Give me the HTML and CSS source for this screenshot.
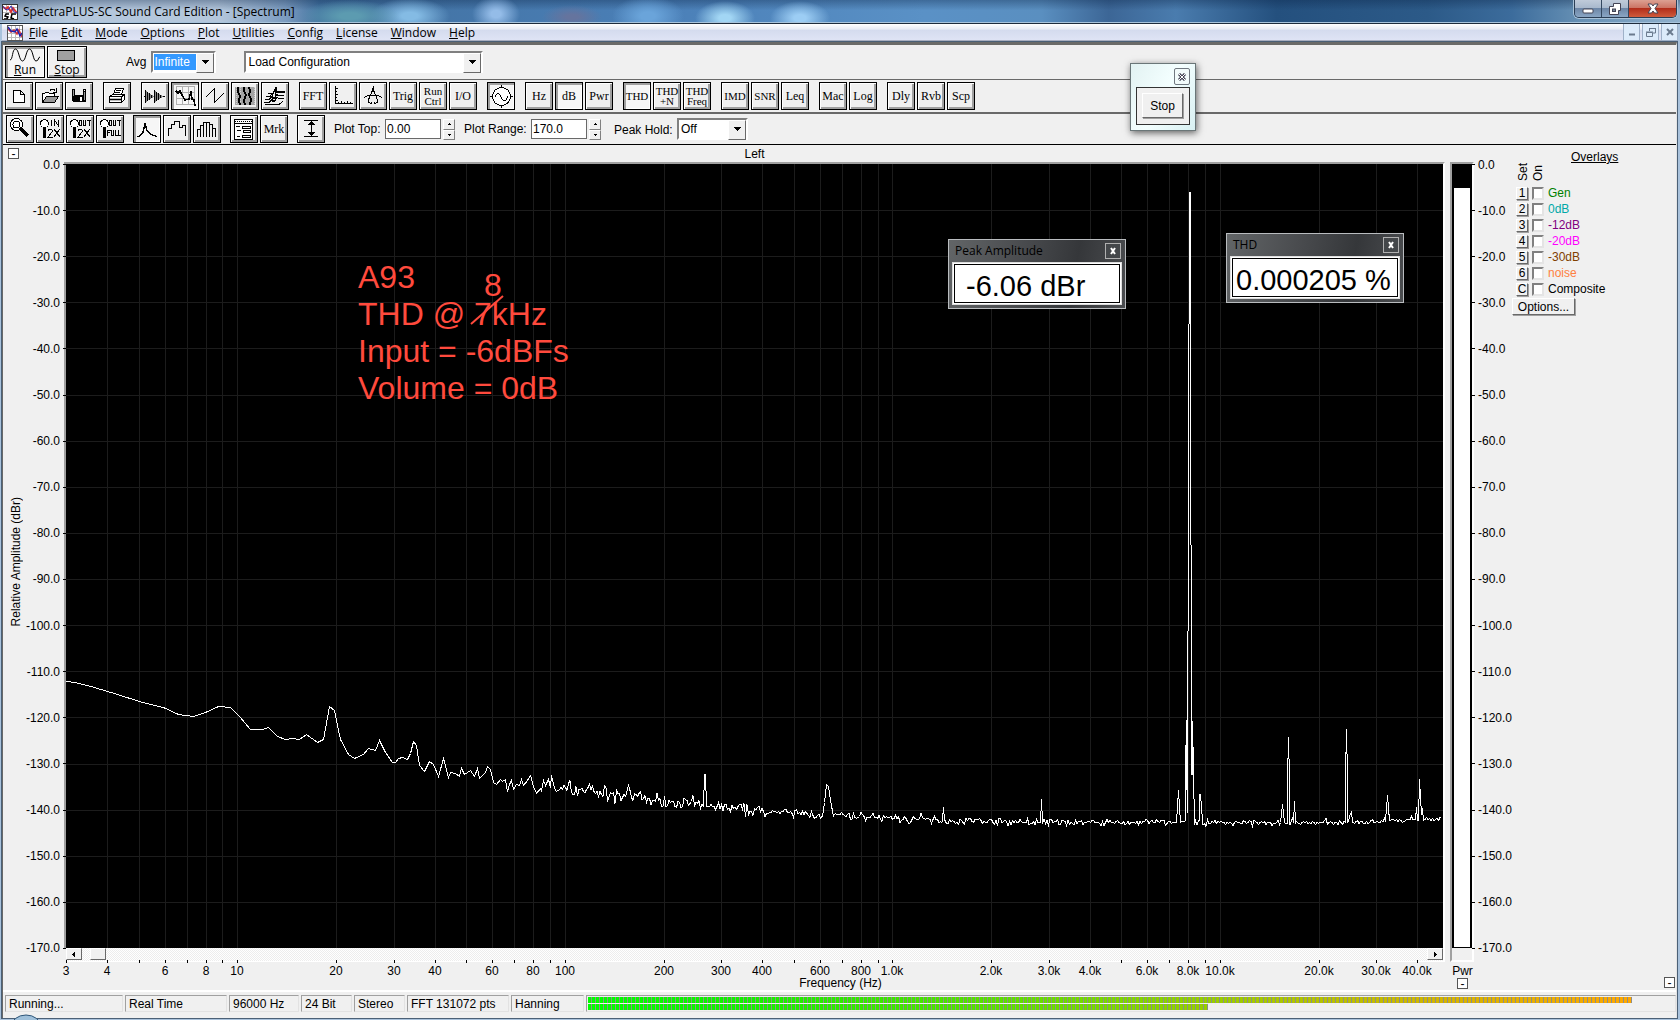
FILE: index.html
```html
<!DOCTYPE html>
<html lang="en">
<head>
<meta charset="utf-8">
<title>SpectraPLUS-SC Sound Card Edition - [Spectrum]</title>
<link rel="stylesheet" href="styles.css">
</head>
<body>
<header class="titlebar">
  <svg class="appicon" viewBox="0 0 16 16"><rect width="16" height="16" fill="#fff"/><path d="M0 3.500h16M0 8.500h16M4.500 0v16M9.500 0v16" stroke="#bbb"/><path d="M1 3l3 2 2-2 3 5 2-4 4 5" fill="none" stroke="#d33" stroke-width="2"/><path d="M1 2l2 3 3 1 3-4 3 6 3 1" fill="none" stroke="#33b" stroke-width="1"/><path d="M7 10l-3 0-1 2 3 1-1 2H2M14 10l-4 0-1 4 3 1" fill="none" stroke="#000" stroke-width="1.500"/><rect x=".5" y=".5" width="15" height="15" fill="none" stroke="#333"/></svg>
  <h1>SpectraPLUS-SC Sound Card Edition - [Spectrum]</h1>
  <div class="caption">
    <button aria-label="Minimize"><svg width="12" height="12"><rect x="1" y="6" width="10" height="4" rx="1" fill="#fff" stroke="#445"/></svg></button>
    <button aria-label="Restore"><svg width="12" height="12"><path d="M4.500.5h7v7h-2v4h-9v-8h4z" fill="#fff" stroke="#445"/><rect x="3.500" y="6" width="3" height="2.500" fill="#789" stroke="#445"/></svg></button>
    <button class="close" aria-label="Close"><svg width="12" height="11"><path d="M1 1h3.500L6 3l1.500-2H11L8 5.500l3 4.500H7.500L6 8l-1.500 2H1l3-4.500z" fill="#fff" stroke="#445"/></svg></button>
  </div>
</header>
<nav class="menubar">
  <svg class="docicon" viewBox="0 0 16 16"><rect width="16" height="16" fill="#fff"/><path d="M0 4.500h16M0 8.500h16M0 12.500h16M4.500 0v16M8.500 0v16M12.500 0v16" stroke="#bbb"/><path d="M1 4l3 3 3-2 3 4 2-4 3 7" fill="none" stroke="#d33" stroke-width="1.500"/><path d="M1 2l3 4 4 1 2-3 3 7 2-3" fill="none" stroke="#22a" stroke-width="1.500"/><rect x=".5" y=".5" width="15" height="15" fill="none" stroke="#555"/></svg>
  <a href="#"><u>F</u>ile</a><a href="#"><u>E</u>dit</a><a href="#"><u>M</u>ode</a><a href="#"><u>O</u>ptions</a><a href="#"><u>P</u>lot</a><a href="#"><u>U</u>tilities</a><a href="#"><u>C</u>onfig</a><a href="#"><u>L</u>icense</a><a href="#"><u>W</u>indow</a><a href="#"><u>H</u>elp</a>
  <div class="mdi">
    <button aria-label="Minimize document"><svg width="10" height="10"><path d="M2 7.500h6" stroke="#6b7b8e" stroke-width="2"/></svg></button>
    <button aria-label="Restore document"><svg width="10" height="10"><path d="M3.500 4V1.500h6V6H7M.5 5.500h6v4h-6zM0 5h7M3 1.500h7" fill="none" stroke="#6b7b8e"/></svg></button>
    <button aria-label="Close document"><svg width="10" height="10"><path d="M2 2l6 6M8 2l-6 6" stroke="#6b7b8e" stroke-width="2"/></svg></button>
  </div>
</nav>

<main class="client">
  <div class="bar bar-run">
    <button class="big pressed"><svg width="32" height="14" viewBox="0 0 32 14"><path d="M1 12C4 12 3 1 6.500 1S10 13 13.500 13 17 1 20.500 1 24 13 27 13s2-4 4-4" fill="none" stroke="#000"/></svg><span><u>R</u>un</span></button>
    <button class="big"><svg width="20" height="12"><rect x=".5" y=".5" width="17" height="10" fill="#a0a0a0" stroke="#000"/></svg><span><u>S</u>top</span></button>
    <label class="avg-label" for="avg">Avg</label>
    <span class="combo avg"><select id="avg"><option>Infinite</option></select></span>
    <span class="combo config"><select aria-label="Configuration"><option>Load Configuration</option></select></span>
  </div>

  <div class="bar bar-tools">
    <div class="group">
      <button class="tool" aria-label="New"><svg viewBox="1 1 26 26"><path d="M8.500 8.500h7l4 4v8h-11zM15.500 8.500v4h4" fill="#fff" stroke="#000"/></svg></button>
      <button class="tool" aria-label="Open"><svg viewBox="1 1 26 26"><path d="M7.500 20.500v-9h2l1-1h3l1 1h5v3" fill="#fff" stroke="#000"/><path d="M7.500 20.500l4-6h12l-4 6z" fill="#999" stroke="#000"/><path d="M15 8.500c2-2 4-2 5 0M21.500 6v4h-4" fill="none" stroke="#000"/></svg></button>
      <button class="tool" aria-label="Save"><svg viewBox="1 1 26 26"><path d="M7 7h14v13H8l-1-1z" fill="#000"/><path d="M10 7h8v6h-8z" fill="#eee"/><path d="M15 15h2v4h-2zM19 8h1v1h-1z" fill="#fff"/><path d="M8 8h1v6H8zM19 10h1v8h-1z" fill="#999"/></svg></button>
    </div>
    <div class="group">
      <button class="tool" aria-label="Print"><svg viewBox="1 1 26 26"><path d="M10.500 12.500l2-6h8l-2 6z" fill="#fff" stroke="#000"/><path d="M13 8.500h5M12 10.500h5" stroke="#000"/><path d="M6.500 14.500l3-2h12v5l-3 3h-12z" fill="#fff" stroke="#000"/><path d="M7 16h11v1H7zM7 18h11v1H7z" fill="#bbb"/><path d="M6 14.500h12.500M18.500 20v-5l3-3M6 17.500h12" stroke="#000" fill="none"/></svg></button>
    </div>
    <div class="group">
      <button class="tool" aria-label="Time series"><svg viewBox="1 1 26 26"><path d="M3 14.500h21" stroke="#000"/><path d="M4 8l9 6.500L4 21zM13 8l9 6.500L13 21z" fill="#888"/><path d="M4.500 8v13M6.500 10v9M8.500 11v7M10.500 13v3M13.500 8v13M15.500 10v9M17.500 11v7M19.500 13v3" stroke="#000"/></svg></button>
      <button class="tool pressed" aria-label="Spectrum"><svg viewBox="1 1 26 26"><path d="M5.500 4.500h18v18h-18zM11.500 4v19M17.500 4v19M5 10.500h19M5 16.500h19" fill="none" stroke="#b0b0b0"/><path d="M5 9l2 2 2-2 2 4 3 5 4-1 2-8 1 8 2 1 1 6" fill="none" stroke="#000" stroke-width="1.500"/></svg></button>
      <button class="tool" aria-label="Phase"><svg viewBox="1 1 26 26"><path d="M4.500 15.500l9-9v14l9-9" fill="none" stroke="#000"/></svg></button>
      <button class="tool" aria-label="Spectrogram"><svg viewBox="1 1 26 26"><rect x="4" y="5" width="20" height="18" fill="#a5a5a5"/><path d="M5 5v18M9 5v18M23 5v18" stroke="#d0d0d0" stroke-dasharray="1 1"/><path d="M7 5v5l2 4-1 4 1 5M13 5v4l2 4-2 5 1 5M18 5l1 4-1 4 2 4-1 6" fill="none" stroke="#000" stroke-width="2"/></svg></button>
      <button class="tool" aria-label="3-D surface"><svg viewBox="1 1 26 26"><path d="M3 20.500h5l3-3 2 2 3-4 2 1h5M4 17.500h4l3-3 2 2 3-4 1 1h6M5 14.500h4l5-6 2 2h8M7 11.500h5l3-6 1 4h8M4 22.500h14l4-3" fill="none" stroke="#000"/><path d="M14.500 7v12M11.500 12v8" stroke="#000"/></svg></button>
    </div>
    <div class="group">
      <button class="tool">FFT</button>
      <button class="tool" aria-label="Scaling"><svg viewBox="1 1 26 26"><path d="M6.500 4v17.500H24M6 6.500h3M6 9.500h2M6 12.500h3M6 15.500h2M6 18.500h3M9.500 22v-2M12.500 22v-3M15.500 22v-2M18.500 22v-3M21.500 22v-2" fill="none" stroke="#000"/></svg></button>
      <button class="tool" aria-label="Calibration"><svg viewBox="1 1 26 26"><path d="M14 4v3M14 7L9 19c2 4 4 2 4 1M14 7l5 12c-2 4-4 2-4 1M5 16c4-4 14-4 18 0" fill="none" stroke="#000"/><path d="M13 6h2v4h-2z"/></svg></button>
      <button class="tool">Trig</button>
      <button class="tool two">Run<br>Ctrl</button>
      <button class="tool">I/O</button>
    </div>
    <div class="group">
      <button class="tool pressed" aria-label="Signal generator"><svg viewBox="1 1 26 26"><circle cx="14.500" cy="14.500" r="9" fill="#fff" stroke="#000"/><path d="M14.500 3v3M14.500 23v3M3 14.500h3M23 14.500h3M8 15c2-5 4-5 6 0s5 5 7-1" fill="none" stroke="#000"/></svg></button>
    </div>
    <div class="group"><button class="tool">Hz</button><button class="tool pressed">dB</button><button class="tool">Pwr</button></div>
    <div class="group"><button class="tool caps pressed">THD</button><button class="tool two">THD<br>+N</button><button class="tool two">THD<br>Freq</button></div>
    <div class="group"><button class="tool caps">IMD</button><button class="tool caps">SNR</button><button class="tool">Leq</button></div>
    <div class="group"><button class="tool">Mac</button><button class="tool">Log</button></div>
    <div class="group"><button class="tool">Dly</button><button class="tool">Rvb</button><button class="tool">Scp</button></div>
  </div>

  <div class="bar bar-plot">
    <div class="group">
      <button class="tool" aria-label="Zoom"><svg viewBox="1 1 26 26"><circle cx="10.500" cy="9.500" r="6" fill="#fff" stroke="#000"/><circle cx="10.500" cy="9.500" r="3.500" fill="none" stroke="#000"/><path d="M14 13l8 8" stroke="#000" stroke-width="3"/></svg></button>
      <button class="tool" aria-label="Zoom in 2X"><svg viewBox="1 1 26 26"><circle cx="8.500" cy="8.500" r="4" fill="#fff" stroke="#000"/><path d="M8 13h2v10H7V13z"/><path d="M15.500 5v6M18.500 11V5l4 6V5M12 16c1-3 5-2 4 1l-4 5h5M18 14l6 8M24 14l-6 8" fill="none" stroke="#000"/></svg></button>
      <button class="tool" aria-label="Zoom out 2X"><svg viewBox="1 1 26 26"><circle cx="8.500" cy="8.500" r="4" fill="#fff" stroke="#000"/><path d="M8 13h2v10H7V13z"/><path d="M13.500 5.500h2v5h-2zM17.500 5v5.500h2V5M21 5.500h4M23.500 5v6M12 16c1-3 5-2 4 1l-4 5h5M18 14l6 8M24 14l-6 8" fill="none" stroke="#000"/></svg></button>
      <button class="tool" aria-label="Zoom out full"><svg viewBox="1 1 26 26"><circle cx="8.500" cy="8.500" r="4" fill="#fff" stroke="#000"/><path d="M8 13h2v10H7V13z"/><path d="M13.500 5.500h2v5h-2zM17.500 5v5.500h2V5M21 5.500h4M23.500 5v6M11.500 21v-6h3M11 17.500h3M15.500 15v5.500h2V15M19.500 15v5.500h2M22.500 15v5.500h2" fill="none" stroke="#000"/></svg></button>
    </div>
    <div class="group">
      <button class="tool pressed" aria-label="Line plot"><svg viewBox="1 1 26 26"><path d="M4 21.500h2l4-4 2-9 2 7 4 4 6 2" fill="none" stroke="#000" stroke-width="1.500"/></svg></button>
      <button class="tool" aria-label="Step plot"><svg viewBox="1 1 26 26"><path d="M5.500 21v-8h3V9h3V6h5v6h3v-2h3v11" fill="none" stroke="#000"/></svg></button>
      <button class="tool" aria-label="Bar plot"><svg viewBox="1 1 26 26"><path d="M4.500 22v-8h3v8M7.500 20V10h3v12M10.500 12V7h3v15M13.500 7h3v15M16.500 9h3v13M19.500 13h3v9" fill="none" stroke="#000"/></svg></button>
    </div>
    <div class="group">
      <button class="tool" aria-label="Plot options"><svg viewBox="1 1 26 26"><rect x="4.500" y="4.500" width="18" height="20" fill="#fff" stroke="#000"/><path d="M5 6.500h18" stroke="#000" stroke-dasharray="1 1"/><path d="M4 8.500h19M12.500 11.500h8v2h-8zM13.500 15.500h7v2h-7zM12.500 20.500h8v2h-8zM6 11.500h4M7 15.500h4M7 21.500h3" fill="none" stroke="#000"/></svg></button>
      <button class="tool">Mrk</button>
    </div>
    <div class="group">
      <button class="tool" aria-label="Auto scale"><svg viewBox="1 1 26 26"><path d="M7 5.500h14M7 21.500h14M14.500 6v15" stroke="#000"/><path d="M14 6h1l3 4h-7zM14 21h1l3-4h-7z"/></svg></button>
    </div>
    <div class="field"><label for="top">Plot Top:</label><input id="top" value="0.00"><span class="spin"><button aria-label="Raise top"></button><button class="down" aria-label="Lower top"></button></span></div>
    <div class="field range"><label for="range">Plot Range:</label><input id="range" value="170.0"><span class="spin"><button aria-label="Raise range"></button><button class="down" aria-label="Lower range"></button></span></div>
    <div class="field hold"><label for="hold">Peak Hold:</label><span class="combo"><select id="hold"><option>Off</option></select></span></div>
  </div>

  <section class="work">
    <button class="fold fold-left" aria-label="Collapse plot">-</button>
    <h2 class="channel">Left</h2>
    <div class="yaxis">
      <span class="ytitle">Relative Amplitude (dBr)</span>
      <ol class="scale"><li>0.0</li><li>-10.0</li><li>-20.0</li><li>-30.0</li><li>-40.0</li><li>-50.0</li><li>-60.0</li><li>-70.0</li><li>-80.0</li><li>-90.0</li><li>-100.0</li><li>-110.0</li><li>-120.0</li><li>-130.0</li><li>-140.0</li><li>-150.0</li><li>-160.0</li><li>-170.0</li></ol>
    </div>
    <div class="plot">
      <svg class="trace" viewBox="0 0 1377 784" preserveAspectRatio="none"><g id="grid"></g><polyline id="curve"/></svg>
      <div class="note">
        <p>A93</p><p>THD @ 7kHz</p><p>Input = -6dBFs</p><p>Volume = 0dB</p>
        <span class="fix">8</span>
        <svg class="strike" width="34" height="30"><path d="M1 29L33 1" stroke="#ff4a3d" stroke-width="2"/></svg>
      </div>
      <div class="readout peak"><div class="cap"><h3>Peak Amplitude</h3><button aria-label="Close peak amplitude"><svg width="6" height="8"><path d="M1 1l4 6M5 1L1 7" stroke="#fff" stroke-width="2"/></svg></button></div><output>-6.06 dBr</output></div>
      <div class="readout thd"><div class="cap"><h3>THD</h3><button aria-label="Close THD"><svg width="6" height="8"><path d="M1 1l4 6M5 1L1 7" stroke="#fff" stroke-width="2"/></svg></button></div><output>0.000205 %</output></div>
    </div>
    <div class="scroll"><button aria-label="Scroll left"></button><span class="thumb"></span><button class="right" aria-label="Scroll right"></button></div>
    <div class="xaxis"><div class="ticks" id="ticks"></div><span>Frequency (Hz)</span></div>
    <div class="power"><div class="level"></div></div>
    <div class="power-foot"></div>
    <div class="power-label"><span>Pwr</span><button class="fold" aria-label="Collapse power">-</button></div>
    <ol class="scale scale-right"><li>0.0</li><li>-10.0</li><li>-20.0</li><li>-30.0</li><li>-40.0</li><li>-50.0</li><li>-60.0</li><li>-70.0</li><li>-80.0</li><li>-90.0</li><li>-100.0</li><li>-110.0</li><li>-120.0</li><li>-130.0</li><li>-140.0</li><li>-150.0</li><li>-160.0</li><li>-170.0</li></ol>
    <aside class="overlays">
      <h3>Overlays</h3>
      <div class="heads"><span>Set</span><span>On</span></div>
      <div class="row gen"><button>1</button><input type="checkbox" id="o1"><label for="o1">Gen</label></div>
      <div class="row zero"><button>2</button><input type="checkbox" id="o2"><label for="o2">0dB</label></div>
      <div class="row m12"><button>3</button><input type="checkbox" id="o3"><label for="o3">-12dB</label></div>
      <div class="row m20"><button>4</button><input type="checkbox" id="o4"><label for="o4">-20dB</label></div>
      <div class="row m30"><button>5</button><input type="checkbox" id="o5"><label for="o5">-30dB</label></div>
      <div class="row noise"><button>6</button><input type="checkbox" id="o6"><label for="o6">noise</label></div>
      <div class="row"><button>C</button><input type="checkbox" id="o7"><label for="o7">Composite</label></div>
      <button class="options">Options...</button>
    </aside>
    <button class="fold fold-right" aria-label="Collapse overlays">-</button>
  </section>

  <footer class="status">
    <span class="w118">Running...</span><span class="w102">Real Time</span><span class="w70">96000 Hz</span><span class="w51">24 Bit</span><span class="w51">Stereo</span><span class="w102">FFT 131072 pts</span><span class="w73">Hanning</span>
    <div class="meter"><i style="width:96%"></i><i class="second" style="width:57%"></i></div>
  </footer>
</main>

<div class="stopbox"><button class="x" aria-label="Close"><svg width="8" height="8"><path d="M1 1l6 6M7 1L1 7" stroke="#445" stroke-width="3"/><path d="M1 1l6 6M7 1L1 7" stroke="#fff"/></svg></button><div class="inner"><button class="stop">Stop</button></div></div>
<svg class="orb" width="26" height="6"><ellipse cx="13" cy="13" rx="15" ry="12" fill="#9fc0da" stroke="#2d5578"/></svg>
<script src="plot.js"></script>
</body>
</html>
```
FILE: styles.css
```css
* { box-sizing: border-box; }
body { margin: 0; min-height: 100vh; display: flex; flex-direction: column; background: #a9c2dc; font: 12px/14px "Liberation Sans", Arial, sans-serif; color: #000; }
h1, h2, h3, p, ol { margin: 0; padding: 0; font-size: 12px; font-weight: normal; list-style: none; }
button, select, input { font: inherit; color: inherit; margin: 0; padding: 0; border-radius: 0; }
svg { display: block; }

.titlebar { height: 24px; display: flex; align-items: center; gap: 5px; padding-left: 2px; border-bottom: 1px solid #1e2c3c; box-shadow: inset 0 -1px #a8c4dc; font-family: "Open Sans", sans-serif;
  background:
    radial-gradient(ellipse 50px 16px at 350px 16px, #5c9bb0 20%, transparent),
    radial-gradient(ellipse 40px 18px at 410px 16px, #84bbe4 20%, transparent),
    radial-gradient(ellipse 24px 18px at 496px 14px, #94bce8 20%, transparent),
    radial-gradient(ellipse 30px 12px at 572px 17px, #65749e 20%, transparent),
    radial-gradient(ellipse 36px 20px at 648px 16px, #6aa4da 20%, transparent),
    radial-gradient(ellipse 30px 17px at 725px 18px, #a2d6f4 20%, transparent),
    radial-gradient(ellipse 30px 17px at 800px 18px, #9ccdf4 20%, transparent),
    linear-gradient(rgba(10,35,70,.35), transparent 45%),
    linear-gradient(90deg, #91a7c0, #b4c7dc 4%, #b4c7dc 13%, #7c9cc0 17%, #41709f 19%, #4b80b8 40%, #5a91c6 55%, #5a8fc0 62%, #3c6696 66%, #4a7cae 70%, #24507e 76%, #2c5a88 85%, #3c6c9c 90%, #6690b4 94%, #8fb0cc); }
.titlebar h1 { line-height: 20px; white-space: nowrap; }
.appicon { width: 16px; height: 16px; }
.caption { display: flex; margin: 0 3px 0 auto; align-self: flex-start; height: 18px; border: 1px solid #2b3e55; border-top: 0; border-radius: 0 0 5px 5px; overflow: hidden; box-shadow: 0 0 0 1px #a9c2d8; }
.caption button { width: 27px; border: 0; border-right: 1px solid #33475f; display: grid; place-items: center; background: linear-gradient(#c0cbda, #a9b9cd 45%, #6b84a4 46%, #8aa6c4); }
.caption .close { width: 47px; border: 0; background: linear-gradient(#dca092, #cc7565 45%, #b02a18 46%, #cf5b3c); }

.menubar { height: 18px; display: flex; align-items: center; gap: 13px; padding-left: 5px; margin: 0 2px; font-family: "Open Sans", sans-serif; background: linear-gradient(#fff, #e6eaf4 30%, #d4dbee 32%, #dfe4f5 90%, #a9afc0 91%, #a9afc0 96%, #fff 97%); }
.menubar a { color: #000; text-decoration: none; line-height: 16px; }
.docicon { width: 16px; height: 16px; margin-right: -7px; }
.mdi { display: flex; gap: 2px; margin-left: auto; align-self: stretch; }
.mdi button { width: 17px; height: 17px; border: 1px solid #9fb1c8; border-top: 0; display: grid; place-items: center; background: #dcebfa; }

.client { flex: 1; display: flex; flex-direction: column; margin: 0 3px 2px 2px; border-left: 1px solid #696969; border-top: 3px solid #6b6b68; border-right: 1px solid #e4e4e4; background: #f0f0f0; box-shadow: 0 0 0 1px #4b6076; }

.bar { display: flex; align-items: flex-start; padding-left: 2px; border-bottom: 1px solid #696969; }
.bar-run { height: 35px; padding-top: 1px; }
.bar-tools { height: 34px; padding-top: 2px; gap: 10px; border-bottom-width: 2px; }
.bar-plot { height: 31px; padding: 1px 0 0 3px; gap: 9px; border-color: #000; }
.group { display: flex; gap: 2px; }
.tool, .big { border: 1px solid #000; background: #f0f0f0; box-shadow: inset 1px 1px #fff, inset -2px -2px #a0a0a0; }
.tool { width: 28px; height: 28px; display: grid; place-items: center; font: 12px/12px "Liberation Serif", serif; white-space: nowrap; }
.tool svg { width: 26px; height: 26px; shape-rendering: crispEdges; }
.tool.caps { font-size: 11px; }
.tool.two { font-size: 11px; line-height: 10px; }
.tool.pressed, .big.pressed { background: #f6f6f6; box-shadow: inset 2px 2px #a0a0a0, inset -1px -1px #fff; }
.big { width: 40px; height: 32px; margin-right: 2px; display: flex; flex-direction: column; align-items: center; justify-content: flex-end; gap: 1px; font: 12px/14px "Open Sans", sans-serif; }
.avg-label { margin: 9px 5px 0 37px; }

.combo { position: relative; display: block; }
.combo select { appearance: none; display: block; width: 100%; height: 22px; padding: 0 20px 0 2px; border: 2px solid; border-color: #808080 #fff #fff #808080; background: #fff; }
.combo::after { content: ""; position: absolute; right: 2px; top: 2px; width: 16px; height: 18px; border: 1px solid; border-color: #fff #696969 #696969 #fff; pointer-events: none; background: linear-gradient(#000, #000) center 6px / 7px 1px no-repeat, linear-gradient(#000, #000) center 7px / 5px 1px no-repeat, linear-gradient(#000, #000) center 8px / 3px 1px no-repeat, linear-gradient(#000, #000) center 9px / 1px 1px no-repeat, #f0f0f0; }
.bar .avg { width: 65px; margin: 5px 28px 0 0; }
.avg select { padding: 1px 17px 1px 1px; color: #fff; background: linear-gradient(#3399ff, #3399ff) content-box, #fff; }
.bar .config { width: 239px; margin-top: 5px; }

.field { display: flex; gap: 2px; padding-top: 4px; }
.field label { width: 49px; line-height: 21px; white-space: nowrap; }
.field input { width: 56px; height: 20px; padding: 0 1px; border: 1px solid #696969; background: #fff; outline: 0; }
.range label { width: 65px; }
.hold { padding: 3px 0 0 4px; }
.hold label { width: 61px; line-height: 24px; }
.hold .combo { width: 71px; }
.spin { display: flex; flex-direction: column; width: 12px; }
.spin button { flex: 1; border: 1px solid; border-color: #fff #808080 #808080 #fff; background: linear-gradient(#000, #000) center 4px / 3px 1px no-repeat, linear-gradient(#000, #000) center 3px / 1px 1px no-repeat, #f0f0f0; }
.spin .down { background: linear-gradient(#000, #000) center 3px / 3px 1px no-repeat, linear-gradient(#000, #000) center 4px / 1px 1px no-repeat, #f0f0f0; }

.work { flex: 1; display: grid; grid-template-columns: 61px 1fr 5px 25px 37px 164px; grid-template-rows: 17px 1fr 14px 28px; }
.fold { width: 11px; height: 11px; border: 1px solid #555; background: #fff; line-height: 8px; }
.fold-left { grid-area: 1 / 1; margin: 3px 0 0 5px; }
.fold-right { grid-area: 4 / 6; justify-self: end; margin: 15px 1px 0 0; }
.channel { grid-area: 1 / 2; text-align: center; line-height: 18px; }
.yaxis { grid-area: 2 / 1; display: flex; justify-content: space-between; align-items: center; z-index: 1; }
.ytitle { writing-mode: vertical-rl; transform: rotate(180deg); margin: 14px 0 0 6px; }
.scale { align-self: stretch; display: flex; flex-direction: column; justify-content: space-between; padding-top: 2px; margin-bottom: -1px; }
.scale li { height: 1px; display: flex; align-items: center; justify-content: flex-end; gap: 3px; }
.scale li::after { content: ""; width: 3px; height: 1px; margin-right: -2px; background: #000; }
.scale-right { grid-area: 2 / 5; z-index: 1; }
.scale-right li { flex-direction: row-reverse; }
.scale-right li::after { margin: 0 0 0 -3px; }

.plot { grid-area: 2 / 2; position: relative; background: #000; border: 2px solid; border-color: #a0a0a0 #fff #000 #a0a0a0; border-bottom: 0; }
.trace { position: absolute; inset: 0; width: 100%; height: 100%; shape-rendering: crispEdges; }
.trace path { stroke: #1c1c1c; }
.trace polyline { fill: none; stroke: #fff; }
.note { position: absolute; left: 292px; top: 95px; color: #ff4a3d; }
.note p, .fix { font-size: 32px; line-height: 37px; white-space: nowrap; }
.fix { position: absolute; left: 126px; top: 8px; }
.strike { position: absolute; left: 112px; top: 36px; }
.readout { position: absolute; width: 178px; height: 70px; padding: 2px 3px 3px; border: 1px solid #b9bcbf; background: linear-gradient(100deg, #626567, #494b4e 40%, #35373a 70%, #4b4d50); }
.peak { left: 882px; top: 75px; }
.thd { left: 1160px; top: 69px; }
.cap { display: flex; justify-content: space-between; height: 20px; padding: 0 1px 0 3px; }
.cap h3 { font-family: "Open Sans", sans-serif; line-height: 17px; }
.cap button { width: 16px; height: 16px; margin-top: 1px; border: 1px solid #b0b0b0; background: #44474a; display: grid; place-items: center; }
.readout output { display: block; height: 43px; padding: 0 3px; border: 3px double #000; outline: 1px solid #ddd; outline-offset: -1px; background: #fff; font-size: 29px; line-height: 42px; white-space: nowrap; }
.peak output { padding-left: 11px; }

.scroll { grid-area: 3 / 2; display: flex; margin-left: 2px; padding-bottom: 1px; border-right: 2px solid #fff; border-bottom: 1px solid #fff; background: repeating-conic-gradient(#fff 0 25%, #ededed 0 50%) 0 0 / 2px 2px; }
.scroll button, .thumb { width: 16px; border: 1px solid; border-color: #fff #696969 #696969 #fff; background: #f0f0f0; }
.scroll button { background: linear-gradient(#000, #000) 5px center / 1px 1px no-repeat, linear-gradient(#000, #000) 6px center / 1px 3px no-repeat, linear-gradient(#000, #000) 7px center / 1px 5px no-repeat, #f0f0f0; }
.scroll .right { margin-left: auto; background: linear-gradient(#000, #000) 8px center / 1px 1px no-repeat, linear-gradient(#000, #000) 7px center / 1px 3px no-repeat, linear-gradient(#000, #000) 6px center / 1px 5px no-repeat, #f0f0f0; }
.thumb { margin-left: 8px; }
.xaxis { grid-area: 4 / 2; display: flex; flex-direction: column; align-items: center; margin: 0 2px; }
.xaxis > span { margin-left: 172px; }
.ticks { position: relative; height: 14px; align-self: stretch; }
.ticks span { position: absolute; top: 2px; transform: translateX(-50%); white-space: nowrap; }
.ticks i { position: absolute; top: -2px; width: 1px; height: 3px; background: #000; }
.power { grid-area: 2 / 4; padding: 24px 2px 1px; border: 2px solid; border-color: #a0a0a0 #fff #000 #a0a0a0; border-bottom: 0; background: #000; margin-right: 1px; }
.level { height: 100%; background: #fff; }
.power-foot { grid-area: 3 / 4; margin-right: 1px; border: 2px solid; border-color: transparent #fff #fff #a0a0a0; border-top: 0; }
.power-label { grid-area: 4 / 4; display: flex; flex-direction: column; align-items: center; padding-top: 2px; }

.overlays { grid-area: 1 / 6 / 4 / 7; padding-top: 5px; }
.overlays h3 { text-decoration: underline; margin-left: 59px; }
.heads { display: flex; gap: 1px; height: 17px; margin-left: 4px; align-items: flex-end; }
.heads span { writing-mode: vertical-rl; transform: rotate(180deg); height: 22px; }
.row { display: flex; height: 16px; align-items: center; margin-left: 4px; }
.heads + .row { margin-top: 4px; }
.row button, .options, .stop { border: 1px solid; border-color: #fff #696969 #696969 #fff; box-shadow: 1px 1px #a0a0a0; background: #f0f0f0; color: #000; }
.row button { width: 12px; height: 13px; line-height: 11px; }
.row input { appearance: none; width: 12px; height: 13px; margin: 0 4px; border: 2px solid; border-color: #808080 #e4e4e4 #e4e4e4 #808080; background: #fff; }
.gen { color: #008000; }
.zero { color: #00a8a8; }
.m12 { color: #800080; }
.m20 { color: #f0f; }
.m30 { color: #804000; }
.noise { color: #ff8040; }
.options { width: 63px; height: 17px; line-height: 14px; margin-top: 1px; display: block; }

.status { height: 28px; display: flex; gap: 2px; padding: 3px 0 6px 2px; border-top: 2px solid #fff; }
.status > * { border: 1px solid; border-color: #a0a0a0 #e2e2e2 #e2e2e2 #a0a0a0; padding-left: 3px; line-height: 16px; white-space: nowrap; }
.w118 { width: 118px; }
.w102 { width: 102px; }
.w70 { width: 70px; }
.w51 { width: 51px; }
.w73 { width: 73px; }
.status .meter { flex: 1; display: flex; flex-direction: column; gap: 1px; padding: 1px 0 0 1px; }
.meter i { display: block; height: 6px; background: repeating-linear-gradient(90deg, transparent 0 3px, #8c8c8c 3px 4px), linear-gradient(90deg, #0f0, #14f000 15%, #7cd800 50%, #a8c800 65%, #d4b400 82%, #ffa800); }
.meter .second { background-size: auto, 169% 100%; }

.stopbox { position: absolute; left: 1130px; top: 63px; width: 66px; height: 68px; padding: 5px; border: 1px solid #6a7678; background: linear-gradient(120deg, #e2f2f2, #f4ffff 50%, #d8f0f2); box-shadow: 1px 2px 7px rgba(0,0,0,.6); }
.stopbox .x { display: grid; place-items: center; width: 16px; height: 17px; margin: -1px 0 2px auto; border: 1px solid #707880; border-radius: 2px; background: #f2fbfb; }
.inner { height: 38px; padding: 5px; border: 1px solid #333; background: #f0f0f0; }
.stop { width: 41px; height: 25px; }
.orb { position: absolute; left: 13px; top: calc(100vh - 6px); }
```
FILE: plot.js
```javascript
// Grid and spectrum trace, in the units of the plot's 1377 x 784 view box.
const W = 1377, H = 784, F0 = 3, DECADE = 327.6;
const fx = f => DECADE * Math.log10(f / F0);
let d = '';
for (let i = 1; i < 17; i++) d += `M0 ${Math.round(i * H / 17) + .5}H${W}`;
const ticks = document.getElementById('ticks');
for (const dec of [1, 10, 100, 1000, 10000]) {
  for (let n = 1; n < 10; n++) {
    const f = n * dec;
    if (f < 3 || f > 45000) continue;
    const x = Math.round(fx(f));
    if (x > 0) d += `M${x + .5} 0V${H}`;
    const t = document.createElement('i');
    t.style.left = x / W * 100 + '%';
    ticks.append(t);
    if (![1, 2, 3, 4, 6, 8].includes(n)) continue;
    const s = document.createElement('span');
    s.textContent = f >= 1000 ? (f / 1000).toFixed(1) + 'k' : f;
    s.style.left = x / W * 100 + '%';
    ticks.append(s);
  }
}
const path = document.createElementNS('http://www.w3.org/2000/svg', 'path');
path.setAttribute('d', d);
document.getElementById('grid').append(path);

// Low end of the spectrum: x, y pairs.
const low = [0,517,9,518,28,523,51,530,76,538,97,543,112,550,127,552,139,548,152,542,164,543,173,552,184,565,196,565,202,563,211,572,219,575,226,574,233,575,240,570,251,578,257,575,263,542,268,546,271,561,274,575,282,590,288,594,297,590,302,584,309,586,313,576,319,588,326,598,329,598,332,594,336,593,341,595,344,589,347,577,350,581,353,601,358,607,363,597,367,600,372,612,377,594,382,613,384,608,389,609,393,612,395,604,398,610,404,606,408,612,411,604,413,614,419,608,421,602,424,605,427,618,430,620,434,615,436,617,439,615,441,627,443,620,445,616,447,625,450,620,453,621,455,615,457,621,461,616,464,611,467,622,470,629,474,624,475,626,477,616,479,621,482,615,484,623,485,611,488,624];
const pts = [];
for (let i = 0; i < low.length; i += 2) pts.push([low[i], low[i + 1]]);

// Noise floor: x, level, spread.
const floor = [[488,626,10],[520,624,10],[545,630,9],[575,634,8],[612,638,7],[650,642,6],[700,647,6],[760,651,5],[830,654,5],[920,657,4],[1000,658,4],[1110,658,3],[1300,658,3],[1340,655,3],[1377,655,3]];
let seed = 7;
const rnd = () => (seed = (seed * 16807) % 2147483647) / 2147483647;
for (let x = 490; x < 1376; x += 1.5) {
  let k = 0;
  while (floor[k + 1][0] < x) k++;
  const [a, b] = [floor[k], floor[k + 1]], t = (x - a[0]) / (b[0] - a[0]);
  const r = rnd() + rnd() - 1, spread = a[2] + (b[2] - a[2]) * t;
  pts.push([x, Math.round(a[1] + (b[1] - a[1]) * t - r * spread * (rnd() > .9 ? 1.8 : 1))]);
}

// Tones and harmonics that stand out of the floor.
const spikes = [
  [637,642, 638,610, 639,610, 640,642], [756,652, 758,638, 760,620, 762,622, 764,636, 767,652],
  [876,655, 877,643, 878,655], [974,658, 975,635, 976,658],
  [1110,658, 1111,642, 1112,626, 1113,642, 1114,658],
  [1119,655, 1119,607, 1120,556, 1120,602, 1121,648, 1122,302, 1123,28, 1124,28, 1124,140, 1125,610, 1126,610, 1126,557, 1127,608, 1128,660],
  [1133,656, 1133,630, 1134,630, 1136,656], [1214,658, 1216,640, 1218,658],
  [1221,658, 1221,615, 1222,573, 1223,615, 1223,658], [1227,658, 1228,637, 1229,658],
  [1279,658, 1279,612, 1280,565, 1281,612, 1281,658], [1283,652, 1285,647, 1286,658],
  [1319,656, 1321,631, 1323,656], [1349,655, 1350,643, 1351,656], [1352,656, 1353,615, 1355,656], [1355,650, 1356,644, 1357,656]
];
let out = pts;
for (const s of spikes) {
  const x0 = s[0], x1 = s[s.length - 2], ins = [];
  for (let i = 0; i < s.length; i += 2) ins.push([s[i], s[i + 1]]);
  out = out.filter(p => p[0] < x0).concat(ins, out.filter(p => p[0] > x1));
}
document.getElementById('curve').setAttribute('points', out.map(p => (p[0] + .5) + ',' + (p[1] + .5)).join(' '));
```
